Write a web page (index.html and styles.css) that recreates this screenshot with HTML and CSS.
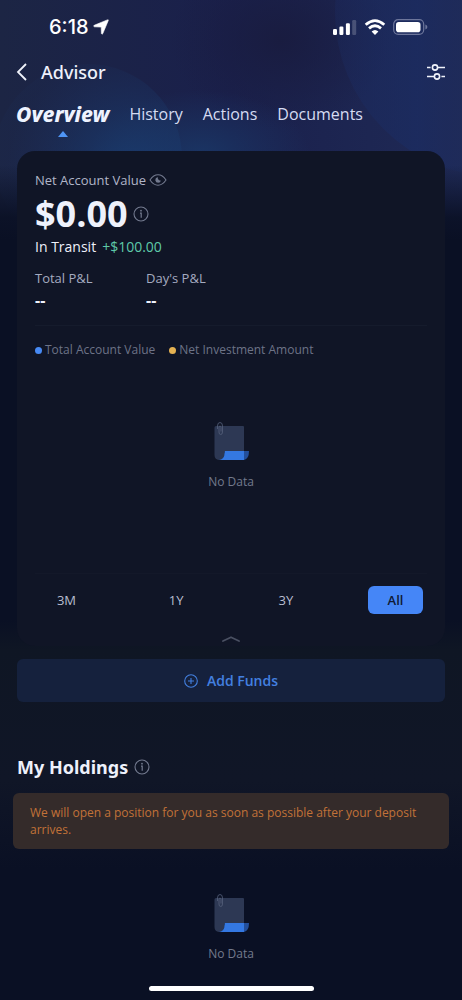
FILE: index.html
```html
<!DOCTYPE html>
<html lang="en">
<head>
<meta charset="utf-8">
<meta name="viewport" content="width=device-width, initial-scale=1">
<title>Advisor</title>
<link rel="stylesheet" href="styles.css">
</head>
<body>
<svg class="sprite" aria-hidden="true">
  <symbol id="info" viewBox="0 0 16 16">
    <circle cx="8" cy="8" r="7" fill="none" stroke="currentColor" stroke-width="1.1"/>
    <circle cx="8" cy="4.700" r="0.9" fill="currentColor"/>
    <path d="M7 7.200H8.200V11.800" fill="none" stroke="currentColor" stroke-width="1.200"/>
  </symbol>
  <symbol id="paper" viewBox="0 0 38 40">
    <path d="M4 5H31Q32 5 32 6V31H12.500V33Q12 38.500 7 39Q2.500 38.500 2.500 34V6.500Q2.500 5 4 5Z" fill="#2d3854"/>
    <path d="M13 30H32V39H7Q12.500 38 12.500 32Z" fill="#3478e2"/>
    <path d="M32 30H37Q37 38 32 39Z" fill="#234f9c"/>
    <path d="M5.500 8V5Q5.500 1.500 8 1.500T10.500 5V11Q10.500 13.500 8.700 13.500T7 11V6.500Q7 5 8 5T9 6.500V10.500" fill="none" stroke="#56617b" stroke-width="0.8"/>
  </symbol>
</svg>

<div class="screen">
  <svg class="backdrop" viewBox="0 0 462 240" preserveAspectRatio="none" aria-hidden="true">
    <defs>
      <linearGradient id="base" x1="0" x2="1">
        <stop offset="0" stop-color="#1c2544"/>
        <stop offset="0.5" stop-color="#1a204c"/>
        <stop offset="1" stop-color="#1f2a56"/>
      </linearGradient>
      <radialGradient id="dark" cx="0.5" cy="0.5" r="0.5">
        <stop offset="0" stop-color="#191c40"/>
        <stop offset="1" stop-color="#191c40" stop-opacity="0"/>
      </radialGradient>
      <radialGradient id="orb" cx="0.72" cy="0.58" r="0.65">
        <stop offset="0" stop-color="#1a3d70" stop-opacity="0.9"/>
        <stop offset="0.5" stop-color="#1a3869" stop-opacity="0.5"/>
        <stop offset="1" stop-color="#1c2f5a" stop-opacity="0.15"/>
      </radialGradient>
      <radialGradient id="glow" cx="0.5" cy="0.5" r="0.5">
        <stop offset="0" stop-color="#1a3868" stop-opacity="0.85"/>
        <stop offset="1" stop-color="#1a3868" stop-opacity="0"/>
      </radialGradient>
      <linearGradient id="side" x1="0" x2="1">
        <stop offset="0" stop-color="#1b2b60" stop-opacity="0.35"/>
        <stop offset="0.25" stop-color="#1b2c62" stop-opacity="0.7"/>
        <stop offset="0.5" stop-color="#202b58" stop-opacity="0.3"/>
      </linearGradient>
      <linearGradient id="fade" x1="0" x2="0" y1="0" y2="1">
        <stop offset="0" stop-color="#0a1024" stop-opacity="0"/>
        <stop offset="0.7" stop-color="#0a1024" stop-opacity="0.9"/>
        <stop offset="1" stop-color="#0a1024"/>
      </linearGradient>
    </defs>
    <rect width="462" height="240" fill="url(#base)"/>
    <ellipse cx="280" cy="40" rx="110" ry="90" fill="url(#dark)"/>
    <ellipse cx="200" cy="155" rx="110" ry="65" fill="url(#glow)"/>
    <circle cx="88" cy="158" r="94" fill="url(#orb)"/>
    <circle cx="500" cy="12" r="165" fill="url(#side)"/>
    <rect y="165" width="462" height="75" fill="url(#fade)"/>
  </svg>

  <div class="statusbar">
    <div class="clock">
      <span>6:18</span>
      <svg width="16" height="16" viewBox="0 0 16 16" aria-hidden="true"><path d="M14.300 .9Q15.700 .3 15.200 1.700L9.800 14.600Q9 16 8.400 14.500L8.200 8.100 1.500 7.800Q-.1 7.200 1.200 6.300Z" fill="#fff" stroke="#fff" stroke-width="0.600"/></svg>
    </div>
    <svg width="96" height="18" viewBox="0 0 96 18" aria-hidden="true">
      <g fill="#fff">
        <rect x="0" y="11" width="4" height="6" rx="1.200"/>
        <rect x="6.400" y="8.500" width="4" height="8.500" rx="1.200"/>
        <rect x="12.900" y="5.200" width="4" height="11.800" rx="1.200"/>
        <rect x="19.200" y="2" width="4" height="15" rx="1.200" opacity=".2"/>
      </g>
      <g fill="none" stroke="#fff" stroke-width="2.800">
        <path d="M32.700 6.800Q42 -1.500 51.300 6.800"/>
        <path d="M36 10.400Q42 5.200 48 10.400"/>
      </g>
      <path d="M38.600 13.400Q42 10.400 45.400 13.400L42 17Z" fill="#fff"/>
      <rect x="60.700" y="1.700" width="30" height="14.600" rx="4.500" fill="none" stroke="#6d769b" stroke-width="1.200"/>
      <rect x="63" y="4" width="24.500" height="10.200" rx="2.800" fill="#fff"/>
      <path d="M92.400 6.500Q94.400 7.200 94.400 9T92.400 11.500Z" fill="#6d769b"/>
    </svg>
  </div>

  <header class="topbar">
    <button class="icon-button" aria-label="Back">
      <svg width="12" height="20" viewBox="0 0 12 20"><path d="M10 2L2 10L10 18" fill="none" stroke="#f0f3fb" stroke-width="1.800"/></svg>
    </button>
    <h1>Advisor</h1>
    <button class="icon-button" aria-label="Settings">
      <svg width="20" height="18" viewBox="0 0 20 18"><g fill="none" stroke="#f0f3fb" stroke-width="1.600"><circle cx="9" cy="4.500" r="2.600"/><path d="M1 4.500H4.600M11.600 4.500H19"/><circle cx="11" cy="13.500" r="2.600"/><path d="M1 13.500H8.400M15.400 13.500H19"/></g></svg>
    </button>
  </header>

  <nav class="tabs">
    <a class="tab tab-active" href="#overview" aria-current="page">Overview</a>
    <a class="tab" href="#history">History</a>
    <a class="tab" href="#actions">Actions</a>
    <a class="tab" href="#documents">Documents</a>
  </nav>

  <main>
    <section class="card" id="overview">
      <div class="label-row">
        <span>Net Account Value</span>
        <button class="icon-button muted" aria-label="Hide amounts">
          <svg width="18" height="12" viewBox="0 0 18 12"><path d="M1 6Q4.500 .8 9 .8T17 6Q13.500 11.200 9 11.200T1 6Z" fill="none" stroke="currentColor" stroke-width="1.100"/><path d="M8.600 3Q6.200 3.800 6.300 6.200Q6.700 8.700 9.200 8.800Q11.600 8.500 11.800 6.400Q8.900 7 8.600 3Z" fill="currentColor"/></svg>
        </button>
      </div>
      <div class="value-row">
        <strong>$0.00</strong>
        <button class="icon-button muted" aria-label="About net account value"><svg width="16" height="16"><use href="#info"/></svg></button>
      </div>
      <div class="transit"><span>In Transit</span><span class="gain">+$100.00</span></div>
      <dl class="stats">
        <div><dt>Total P&amp;L</dt><dd>--</dd></div>
        <div><dt>Day's P&amp;L</dt><dd>--</dd></div>
      </dl>
      <ul class="legend">
        <li class="legend-blue">Total Account Value</li>
        <li class="legend-gold">Net Investment Amount</li>
      </ul>
      <div class="empty chart-empty">
        <svg width="38" height="40" aria-hidden="true"><use href="#paper"/></svg>
        <p>No Data</p>
      </div>
      <div class="ranges">
        <button class="range">3M</button>
        <button class="range">1Y</button>
        <button class="range">3Y</button>
        <button class="range range-active" aria-pressed="true">All</button>
      </div>
      <button class="icon-button collapse" aria-label="Collapse">
        <svg width="20" height="8" viewBox="0 0 20 8"><path d="M2 6L10 2.200L18 6" fill="none" stroke="currentColor" stroke-width="1.800" stroke-linecap="round" stroke-linejoin="round"/></svg>
      </button>
    </section>

    <button class="add-funds">
      <svg width="14" height="14" viewBox="0 0 14 14" aria-hidden="true"><g fill="none" stroke="currentColor" stroke-width="1.100"><circle cx="7" cy="7" r="6.300"/><path d="M7 4V10M4 7H10"/></g></svg>
      <span>Add Funds</span>
    </button>

    <section class="holdings">
      <div class="holdings-head">
        <h2>My Holdings</h2>
        <button class="icon-button muted" aria-label="About holdings"><svg width="16" height="16"><use href="#info"/></svg></button>
      </div>
      <p class="notice">We will open a position for you as soon as possible after your deposit arrives.</p>
      <div class="empty">
        <svg width="38" height="40" aria-hidden="true"><use href="#paper"/></svg>
        <p>No Data</p>
      </div>
    </section>
  </main>
  <div class="home-indicator"></div>
</div>
</body>
</html>
```

FILE: styles.css
```css
* {
  box-sizing: border-box;
}

body {
  margin: 0;
  background: #0a1023;
  color: #eef1fb;
  font-family: "Open Sans", "Noto Sans", sans-serif;
  font-size: 13px;
  line-height: 18px;
}

h1, h2, p, dl, dd, ul {
  margin: 0;
  padding: 0;
}

button {
  border: 0;
  padding: 0;
  background: none;
  color: inherit;
  font: inherit;
}

svg {
  display: block;
}

.sprite {
  position: absolute;
  width: 0;
  height: 0;
}

.screen {
  position: relative;
  isolation: isolate;
  display: flex;
  flex-direction: column;
  min-height: 100vh;
  background: linear-gradient(#0a1024 0, #0a1024 620px, #0f1624 650px, #101627 780px, #0a1024 870px);
}

.backdrop {
  position: absolute;
  inset: 0 0 auto;
  z-index: -1;
  width: 100%;
  height: 240px;
}

.statusbar {
  display: flex;
  justify-content: space-between;
  align-items: center;
  height: 54px;
  padding: 0 33px 0 49px;
}

.clock {
  display: flex;
  align-items: center;
  gap: 4px;
  color: #fff;
  font: 500 20px/24px Inter, sans-serif;
}

.topbar {
  display: flex;
  align-items: center;
  height: 36px;
  padding: 0 16px;
}

.topbar h1 {
  flex: 1;
  margin-left: 13px;
  font-family: "Noto Sans", "Open Sans", sans-serif;
  font-size: 18px;
  font-weight: 500;
  line-height: 24px;
}

.tabs {
  display: flex;
  align-items: flex-start;
  gap: 20px;
  height: 61px;
  padding: 12px 16px 0;
}

.tab {
  color: #d5dcf2;
  font-size: 16px;
  line-height: 24px;
  text-decoration: none;
}

.tab-active {
  display: flex;
  flex-direction: column;
  align-items: center;
  color: #eef3ff;
  font-family: "Noto Sans", "Open Sans", sans-serif;
  font-size: 21px;
  font-style: italic;
  font-weight: 800;
}

.tab-active::after {
  content: "";
  margin-top: 5px;
  border: 5px solid transparent;
  border-top: 0;
  border-bottom: 6px solid #4f95f5;
}

main {
  display: flex;
  flex-direction: column;
  padding: 0 17px;
}

.card {
  display: flex;
  flex-direction: column;
  padding: 20px 18px 3px;
  border-radius: 18px;
  background: #101526;
}

.label-row {
  display: flex;
  align-items: center;
  gap: 3px;
  color: #b0b5c8;
}

.muted {
  color: #737a8f;
}

.value-row {
  display: flex;
  align-items: center;
  gap: 5px;
  padding-top: 1px;
}

.value-row strong {
  font-size: 36px;
  line-height: 48px;
}

.transit {
  display: flex;
  gap: 6px;
  font-size: 14px;
}

.gain {
  color: #5ec9a9;
  font-weight: 500;
}

.stats {
  display: flex;
  padding: 13px 0 16px;
  border-bottom: 1px solid #151b2c;
}

.stats div {
  width: 111px;
}

.stats dt {
  color: #a5abc0;
}

.stats dd {
  margin-top: 4px;
  font-size: 16px;
  font-weight: 700;
}

.legend {
  display: flex;
  gap: 14px;
  margin-top: 15px;
  color: #6d7387;
  font-size: 12px;
  list-style: none;
}

.legend li {
  display: flex;
  align-items: center;
  gap: 3px;
}

.legend li::before {
  content: "";
  width: 7px;
  height: 7px;
  border-radius: 50%;
}

.legend-blue::before {
  background: #478af4;
}

.legend-gold::before {
  background: #e5b252;
}

.empty {
  display: flex;
  flex-direction: column;
  align-items: center;
  gap: 12px;
  padding-top: 44px;
  color: #737a8d;
  font-size: 12px;
}

.chart-empty {
  padding: 62px 0 82px;
}

.ranges {
  display: flex;
  justify-content: space-between;
  padding: 12px 4px 0;
  border-top: 1px solid #131829;
}

.range {
  width: 55px;
  height: 28px;
  border-radius: 6px;
  color: #b9bed0;
  font-weight: 500;
}

.range-active {
  background: #4586f7;
  color: #101a35;
  font-weight: 600;
}

.collapse {
  align-self: center;
  margin-top: 21px;
  color: #4a5062;
}

.add-funds {
  display: flex;
  justify-content: center;
  align-items: center;
  gap: 9px;
  height: 43px;
  margin-top: 13px;
  border-radius: 6px;
  background: #15213d;
  color: #4380e0;
  font-size: 14px;
  font-weight: 600;
}

.holdings {
  padding-top: 52px;
}

.holdings-head {
  display: flex;
  align-items: center;
  gap: 6px;
}

.holdings h2 {
  font-family: "Noto Sans", "Open Sans", sans-serif;
  font-size: 18px;
  line-height: 26px;
}

.notice {
  margin: 13px -4px 0;
  padding: 11px 17px;
  border-radius: 6px;
  background: #342b2a;
  color: #c27238;
  font-size: 12px;
  line-height: 17px;
}

.home-indicator {
  width: 165px;
  height: 5px;
  margin: auto auto 9px;
  border-radius: 3px;
  background: #fff;
}
```
